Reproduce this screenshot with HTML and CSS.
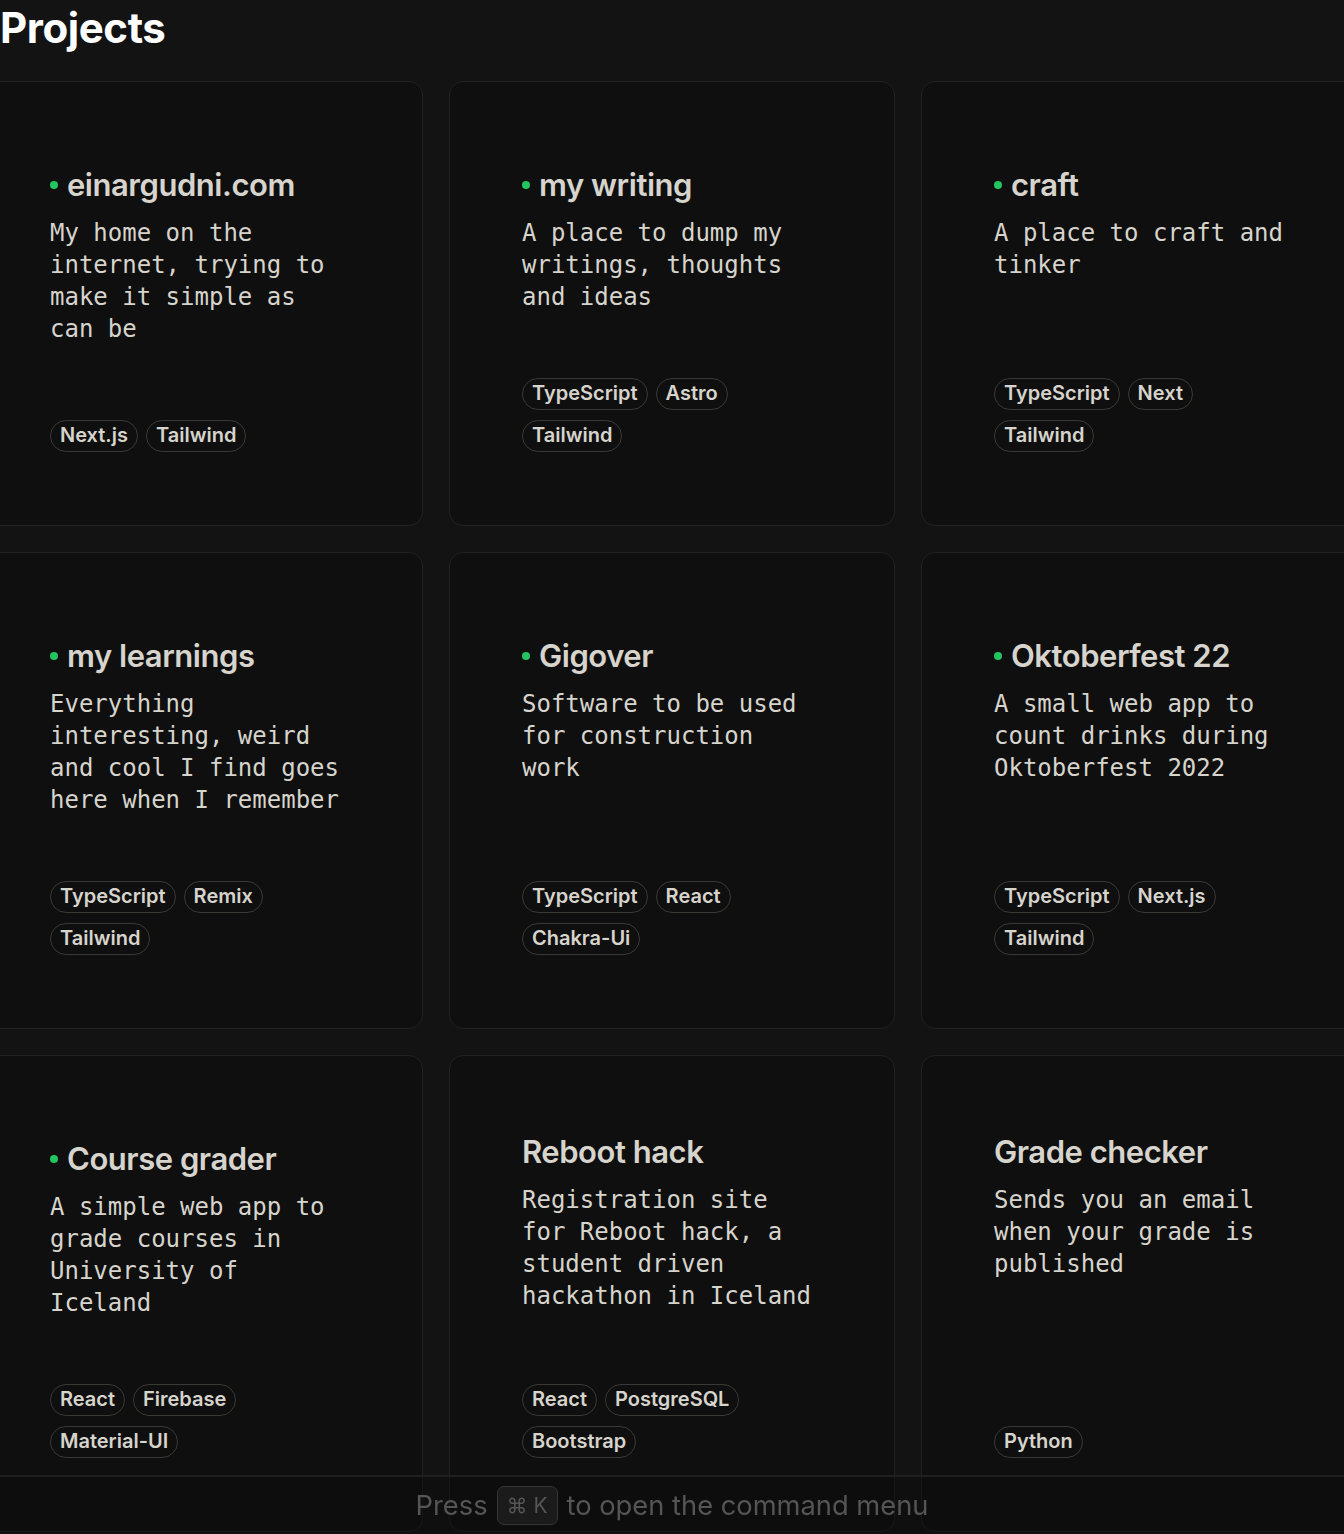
FILE: index.html
```html
<!DOCTYPE html>
<html lang="en">
<head>
<meta charset="utf-8">
<title>Projects</title>
<link rel="stylesheet" href="styles.css">
</head>
<body>
<main class="page">
  <h1 class="page-title">Projects</h1>
  <section class="grid">
    <article class="card">
      <h2 class="card-title live"><span class="dot"></span>einargudni.com</h2>
      <p class="desc">My home on the internet, trying to make it simple as can be</p>
      <ul class="tags"><li class="tag">Next.js</li><li class="tag">Tailwind</li></ul>
    </article>
    <article class="card">
      <h2 class="card-title live"><span class="dot"></span>my writing</h2>
      <p class="desc">A place to dump my writings, thoughts and ideas</p>
      <ul class="tags"><li class="tag">TypeScript</li><li class="tag">Astro</li><li class="tag">Tailwind</li></ul>
    </article>
    <article class="card">
      <h2 class="card-title live"><span class="dot"></span>craft</h2>
      <p class="desc">A place to craft and tinker</p>
      <ul class="tags"><li class="tag">TypeScript</li><li class="tag">Next</li><li class="tag">Tailwind</li></ul>
    </article>
    <article class="card">
      <h2 class="card-title live"><span class="dot"></span>my learnings</h2>
      <p class="desc">Everything interesting, weird and cool I find goes here when I remember</p>
      <ul class="tags"><li class="tag">TypeScript</li><li class="tag">Remix</li><li class="tag">Tailwind</li></ul>
    </article>
    <article class="card">
      <h2 class="card-title live"><span class="dot"></span>Gigover</h2>
      <p class="desc">Software to be used for construction work</p>
      <ul class="tags"><li class="tag">TypeScript</li><li class="tag">React</li><li class="tag">Chakra-Ui</li></ul>
    </article>
    <article class="card">
      <h2 class="card-title live"><span class="dot"></span>Oktoberfest 22</h2>
      <p class="desc">A small web app to count drinks during Oktoberfest 2022</p>
      <ul class="tags"><li class="tag">TypeScript</li><li class="tag">Next.js</li><li class="tag">Tailwind</li></ul>
    </article>
    <article class="card">
      <h2 class="card-title live"><span class="dot"></span>Course grader</h2>
      <p class="desc">A simple web app to grade courses in University of Iceland</p>
      <ul class="tags"><li class="tag">React</li><li class="tag">Firebase</li><li class="tag">Material-UI</li></ul>
    </article>
    <article class="card">
      <h2 class="card-title">Reboot hack</h2>
      <p class="desc">Registration site for Reboot hack, a student driven hackathon in Iceland</p>
      <ul class="tags"><li class="tag">React</li><li class="tag">PostgreSQL</li><li class="tag">Bootstrap</li></ul>
    </article>
    <article class="card">
      <h2 class="card-title">Grade checker</h2>
      <p class="desc">Sends you an email when your grade is published</p>
      <ul class="tags"><li class="tag">Python</li></ul>
    </article>
  </section>
</main>
<footer class="cmd-bar">
  <span>Press</span>
  <kbd class="kbd">⌘ K</kbd>
  <span>to open the command menu</span>
</footer>
</body>
</html>
```

FILE: styles.css
```css
* { box-sizing: border-box; }

html, body {
  margin: 0;
  padding: 0;
  background: #131313;
}

body {
  overflow-x: hidden;
  font-family: Inter, "Noto Sans", sans-serif;
  color: #d6d4cc;
}

.page {
  padding: 0 0 80px 0;
}

.page-title {
  margin: 0;
  font-family: Inter, sans-serif;
  font-weight: 700;
  font-size: 42px;
  line-height: 56px;
  color: #ffffff;
  letter-spacing: -0.01em;
}

.grid {
  display: grid;
  grid-template-columns: repeat(3, 446px);
  gap: 26px;
  margin-top: 25px;
  margin-left: -23px;
  width: 1390px;
}

.card {
  display: flex;
  flex-direction: column;
  background: #0f0f0f;
  border: 1px solid #222222;
  border-radius: 14px;
  padding: 78px 72px 73px 72px;
}

.card-title {
  display: flex;
  align-items: center;
  margin: 0;
  font-family: Inter, sans-serif;
  font-weight: 600;
  font-size: 31px;
  line-height: 36px;
  letter-spacing: -0.015em;
  color: #d6d4cc;
}

.card-title.live {
  margin-top: 7px;
}

.dot {
  width: 8px;
  height: 8px;
  border-radius: 50%;
  background: #22c55e;
  margin-right: 9px;
  flex: none;
}

.desc {
  margin: 14px 0 65px 0;
  font-family: "DejaVu Sans Mono", monospace;
  font-size: 24px;
  line-height: 32px;
  max-width: 20ch;
  color: #d6d4cc;
}

.tags {
  display: flex;
  flex-wrap: wrap;
  gap: 10px 8px;
  margin: auto 0 0 0;
  padding: 0;
  list-style: none;
  max-width: 290px;
}

.tag {
  border: 1.5px solid #3a3935;
  border-radius: 999px;
  padding: 0 9px;
  height: 32px;
  line-height: 29px;
  font-family: Inter, sans-serif;
  font-weight: 600;
  font-size: 20px;
  color: #d6d4cc;
}

.cmd-bar {
  position: fixed;
  left: 0;
  right: 0;
  bottom: 0;
  height: 59px;
  display: flex;
  align-items: center;
  justify-content: center;
  gap: 9px;
  background: rgba(10, 10, 10, 0.45);
  border-top: 2px solid #1f1f1f;
  font-family: Inter, sans-serif;
  font-size: 27.3px;
  color: #555555;
}

.kbd {
  display: inline-flex;
  align-items: center;
  justify-content: center;
  width: 61px;
  height: 39px;
  border: 1.5px solid #363636;
  border-radius: 7px;
  background: rgba(30, 30, 30, 0.9);
  font-family: Inter, "DejaVu Sans", sans-serif;
  font-size: 21px;
  color: #555555;
  gap: 2px;
}
```
